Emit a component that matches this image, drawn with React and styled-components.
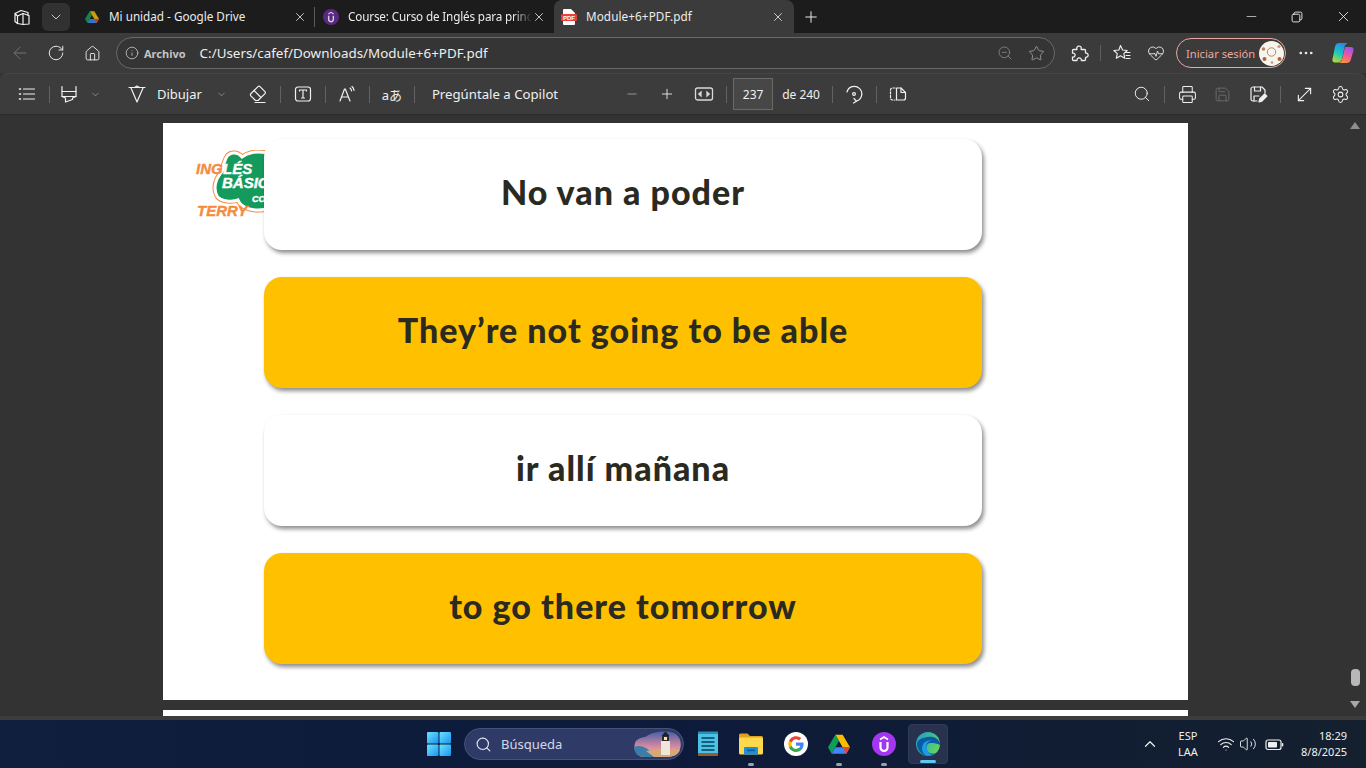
import React from "react";
import styled, { createGlobalStyle } from "styled-components";
import {
  ArrowLeft, RotateCw, Home, Info, ZoomOut, Star, HeartPulse, MoreHorizontal,
  ChevronDown, ChevronUp, X, Plus, Minus, Search, Printer, Save, Settings,
  Wifi, Volume2, MoveDiagonal,
} from "lucide-react";

const GlobalStyle = createGlobalStyle`
  html, body { margin: 0; padding: 0; width: 1366px; height: 768px; overflow: hidden; background: #333; }
  * { box-sizing: border-box; }
  body { font-family: "Noto Sans", "Open Sans", sans-serif; }
`;

/* small drawn icons that the packages don't have */
const Line = ({ size = 18, children, color = "#f0f0f0", sw = 1.2 }) => (
  <svg width={size} height={size} viewBox="0 0 20 20" fill="none" stroke={color} strokeWidth={sw} strokeLinecap="round" strokeLinejoin="round">
    {children}
  </svg>
);

const Workspaces = () => (
  <Line size={20}>
    <path d="M3 6.500 9 3.500l7 2v3M3 6.500v8l2.500 2V9z" />
    <path d="M5.500 9 11 6.500l6 2v8.500l-6 .5-5.500-1" />
    <path d="M11 6.500V17" />
  </Line>
);

const ListIcon = () => (
  <Line size={20}>
    <path d="M6.500 5h11M6.500 10h11M6.500 15h11" />
    <path d="M2.500 5h1M2.500 10h1M2.500 15h1" strokeWidth="1.600" />
  </Line>
);

const Highlighter = () => (
  <Line size={20}>
    <path d="M3 2.500v5h14v-5" />
    <path d="M3 7.500v5l3.500 1.500V18l7-2.500V14l3.500-1.500v-5" />
    <path d="M3 12.500h14" />
  </Line>
);

const Pen = () => (
  <Line size={20}>
    <path d="M2 3.500h16" />
    <path d="M4 4l6 14 6-14" />
    <path d="M7.500 3.500 10 2l2.500 1.500" />
  </Line>
);

const EraserIcon = () => (
  <Line size={20}>
    <path d="M7.500 16.500 2.800 11.800a1.400 1.400 0 0 1 0-2L10 2.600a1.400 1.400 0 0 1 2 0l5 5a1.400 1.400 0 0 1 0 2L10 16.500z" />
    <path d="M6 6.500l6.500 6.500" />
    <path d="M7 18.500h10" />
  </Line>
);

const TextBox = () => (
  <Line size={20}>
    <rect x="2.500" y="3" width="15" height="14" rx="2.500" />
    <path d="M6.500 7V6h7v1M10 6v8M8.500 14h3" />
  </Line>
);

const ReadAloud = () => (
  <Line size={20}>
    <path d="M3 17 7.500 5h.8L13 17M4.800 13h6.500" />
    <path d="M13 4c1 .8 1.400 1.600 1.600 2.800M15 2.500c1.300 1 1.800 2.200 2 3.800" />
  </Line>
);

const FitWidth = () => (
  <svg width="20" height="20" viewBox="0 0 20 20" fill="none" stroke="#d8d8d8" strokeWidth="1.300">
    <rect x="1.500" y="4" width="17" height="12" rx="2" />
    <path d="M7 8 4.800 10 7 12zM13 8l2.200 2L13 12z" fill="#d8d8d8" />
  </svg>
);

const RotatePage = () => (
  <Line size={20}>
    <path d="M3 8a7.500 7.500 0 1 1 9.500 9" />
    <path d="M10 14.500 12.500 17.300 9.500 19" />
    <circle cx="10" cy="10" r="1.400" />
  </Line>
);

const PageView = () => (
  <Line size={20}>
    <path d="M7 4H4.500a2 2 0 0 0-2 2v8a2 2 0 0 0 2 2H7" strokeDasharray="2 1.600" />
    <path d="M8.500 4H13l4.500 4.500V14a2 2 0 0 1-2 2h-7z" />
    <path d="M13 4v4.500h4.500" />
  </Line>
);

const SaveAs = () => (
  <Line size={20}>
    <path d="M9 17H5a2 2 0 0 1-2-2V5a2 2 0 0 1 2-2h9l3 3v3" />
    <path d="M6.500 3v4h6V3M6 17v-5h5" />
    <path d="M11 18l.7-3 5-5 2.200 2.200-5 5z" fill="#f0f0f0" />
  </Line>
);

const PuzzleIcon = () => (
  <Line size={20} color="#ececec" sw={1.300}>
    <path d="M4.500 6.500H8a2.300 2.300 0 1 1 4.300-1l-.2 1h3.400a1 1 0 0 1 1 1V10a2.200 2.200 0 1 1 0 4.300v2.200a1 1 0 0 1-1 1h-3.200a2.200 2.200 0 1 0-4.300 0H4.500a1 1 0 0 1-1-1V14a2 2 0 1 0 0-3.800V7.500a1 1 0 0 1 1-1z" />
  </Line>
);

const FavList = () => (
  <Line size={20} sw={1.100}>
    <path d="M8.500 2.500 10.600 7l4.600.5-3.400 3.100 1 4.600-4.300-2.400-4.200 2.400 1-4.600-3.500-3.100L6.900 7z" />
    <path d="M13.500 9.500H18M14 12.500h4M14 15.500h4" />
  </Line>
);

const Copilot = () => (
  <svg width="24" height="24" viewBox="0 0 24 24">
    <defs>
      <linearGradient id="copA" x1="0.600" y1="0" x2="0.200" y2="1">
        <stop offset="0" stopColor="#2a86ee" /><stop offset="0.5" stopColor="#17c8c0" /><stop offset="1" stopColor="#b4dc30" />
      </linearGradient>
      <linearGradient id="copB" x1="0.700" y1="0" x2="0.300" y2="1">
        <stop offset="0" stopColor="#9a55ea" /><stop offset="0.5" stopColor="#f0589a" /><stop offset="1" stopColor="#f8953a" />
      </linearGradient>
    </defs>
    <path d="M8 2h9c-2 .5-3 2-3.500 4L11 18c-.5 2-2 3.500-4 3.500H4C2 21.500 1 20 1.500 18L4 6C4.500 3.500 6 2 8 2z" fill="url(#copA)" />
    <path d="M14 6h6c2 0 3 1.500 2.500 3.500L20 18c-.5 2.500-2 4-4.500 4H7c2 0 3.500-1.500 4-3.500z" fill="url(#copB)" />
  </svg>
);

const DriveLogo = ({ size = 14 }) => (
  <svg width={size} height={size} viewBox="0 0 24 22">
    <path d="M8 1h8l8 13.500h-8z" fill="#fbbc04" />
    <path d="M8 1 0 14.500 4 21.500l8-14z" fill="#0f9d58" />
    <path d="M4 21.500h16l4-7H8z" fill="#4285f4" />
    <path d="M20 21.500l4-7h-8z" fill="#ea4335" />
  </svg>
);

const UdemyLogo = ({ size = 16, bg = "#a435f0" }) => (
  <svg width={size} height={size} viewBox="0 0 24 24">
    <circle cx="12" cy="12" r="12" fill={bg} />
    <path d="M8 7.500 12 5l4 2.500" fill="none" stroke="#fff" strokeWidth="1.700" />
    <path d="M8.500 10v5.500a3.500 3.500 0 0 0 7 0V10" fill="none" stroke="#fff" strokeWidth="2.200" />
  </svg>
);

const PdfBadge = () => (
  <svg width="16" height="16" viewBox="0 0 16 16">
    <path d="M3 0h7l4 4v11a1 1 0 0 1-1 1H3a1 1 0 0 1-1-1V1a1 1 0 0 1 1-1z" fill="#fff" />
    <rect x="0" y="5" width="16" height="7" rx="1" fill="#ee3b3b" />
    <text x="8" y="10.800" textAnchor="middle" fontSize="6" fontWeight="700" fontFamily="Liberation Sans" fill="#fff">PDF</text>
  </svg>
);

const Avatar = () => (
  <svg width="25" height="25" viewBox="0 0 25 25">
    <circle cx="12.500" cy="12.500" r="12.500" fill="#f8f4ee" />
    <circle cx="12.500" cy="11" r="4.200" fill="none" stroke="#b08a68" strokeWidth="1" />
    <circle cx="4.500" cy="8" r="1.800" fill="#b98354" />
    <circle cx="20" cy="5.500" r="1.600" fill="#c49a72" />
    <circle cx="5.500" cy="18" r="2" fill="#a8683a" />
    <circle cx="20.500" cy="18" r="2" fill="#a8683a" />
    <circle cx="13" cy="21.500" r="1.300" fill="#c29a75" />
  </svg>
);

const WinLogo = () => (
  <svg width="24" height="24" viewBox="0 0 24 24">
    <defs>
      <linearGradient id="winG" x1="0" y1="0" x2="1" y2="1">
        <stop offset="0" stopColor="#6be3ff" /><stop offset="1" stopColor="#1a93ef" />
      </linearGradient>
    </defs>
    <rect x="0" y="0" width="11.500" height="11.500" rx="1" fill="url(#winG)" />
    <rect x="12.500" y="0" width="11.500" height="11.500" rx="1" fill="url(#winG)" />
    <rect x="0" y="12.500" width="11.500" height="11.500" rx="1" fill="url(#winG)" />
    <rect x="12.500" y="12.500" width="11.500" height="11.500" rx="1" fill="url(#winG)" />
  </svg>
);

const Lighthouse = () => (
  <svg width="50" height="30" viewBox="0 0 50 30">
    <defs>
      <linearGradient id="skyG" x1="0" y1="0" x2="0" y2="1">
        <stop offset="0" stopColor="#4a5fa8" /><stop offset="0.6" stopColor="#d88aa0" /><stop offset="1" stopColor="#f2b37a" />
      </linearGradient>
    </defs>
    <path d="M3 14c2-6 9-5 12-7 5-4 18-6 27-3 6 3 8 10 6 16-2 6-8 8-14 8H12C5 28 1 20 3 14z" fill="url(#skyG)" />
    <path d="M2 18c8-3 15 2 22 10H12C6 28 2 24 2 18z" fill="#3b7ca8" />
    <path d="M14 22c8-2 24-3 34-1-2 5-7 7-14 7H22z" fill="#d6a878" />
    <rect x="29" y="12" width="9" height="14" fill="#eee6da" />
    <rect x="30" y="7" width="7" height="5" fill="#2a2a34" />
    <path d="M29.500 7 33.500 2.500 37.500 7z" fill="#1f1f28" />
    <rect x="32" y="8" width="3" height="3" fill="#ffe39a" />
  </svg>
);

const Notepad = () => (
  <svg width="20" height="26" viewBox="0 0 20 26">
    <rect x="0" y="1" width="20" height="24" rx="1" fill="#4cc2e4" />
    <rect x="0" y="22" width="20" height="3" fill="#9a5a2c" />
    <rect x="0" y="0.500" width="20" height="2.500" fill="#2a8fb8" />
    <path d="M3.500 7h13M3.500 11h13M3.500 15h13M3.500 19h13" stroke="#155f80" strokeWidth="1.800" />
  </svg>
);

const Explorer = () => (
  <svg width="24" height="22" viewBox="0 0 24 22">
    <path d="M0 2a1.500 1.500 0 0 1 1.500-1.500h7L11 3h11.500A1.500 1.500 0 0 1 24 4.500V8H0z" fill="#e0a21a" />
    <rect x="0" y="4.500" width="24" height="17" rx="1.500" fill="#ffd84d" />
    <rect x="5" y="14" width="14" height="7.500" rx="1" fill="#1d8fd6" />
    <rect x="8" y="16.500" width="8" height="1.700" fill="#0d5f9e" />
  </svg>
);

const GoogleG = () => (
  <svg width="24" height="24" viewBox="0 0 24 24">
    <circle cx="12" cy="12" r="12" fill="#fff" />
    <path d="M19.600 12.200c0-.6-.1-1.100-.2-1.600H12v3.100h4.300c-.2 1-.8 1.900-1.700 2.400v2h2.600c1.500-1.400 2.400-3.400 2.400-5.900z" fill="#4285f4" />
    <path d="M12 20c2.200 0 4-.7 5.200-1.900l-2.600-2c-.7.500-1.600.8-2.600.8-2 0-3.700-1.400-4.300-3.200H5v2c1.300 2.600 4 4.300 7 4.300z" fill="#34a853" />
    <path d="M7.700 13.700a4.800 4.800 0 0 1 0-3.100v-2H5a8 8 0 0 0 0 7.100z" fill="#fbbc04" />
    <path d="M12 7.200c1.100 0 2.200.4 3 1.200l2.300-2.300A8 8 0 0 0 5 8.600l2.700 2c.6-1.900 2.300-3.400 4.300-3.400z" fill="#ea4335" />
  </svg>
);

const EdgeLogo = () => (
  <svg width="24" height="24" viewBox="0 0 24 24">
    <defs>
      <linearGradient id="edgeTop" x1="0" y1="0" x2="1" y2="0.700">
        <stop offset="0" stopColor="#1a9ad6" /><stop offset="1" stopColor="#62d85a" />
      </linearGradient>
    </defs>
    <circle cx="12" cy="12" r="12" fill="url(#edgeTop)" />
    <path d="M1 12c0 6 5 12 11 12 3 0 6-1 8-3-5 2-9-1-9.500-4.500C10 13 12 11 15 11c3.500 0 6 .5 9 2 0-1 0-2-.3-3C21 5 16 4 11 5 5 6 1.500 8 1 12z" fill="#0c59a4" />
    <path d="M12 24c-5-1-7-6-5.500-10.500S13 7.500 16 9c-3-.6-5 1.500-5.500 4-.6 4 1.500 8 5.500 9.600-1.200.9-2.700 1.400-4 1.400z" fill="#1b9de2" />
  </svg>
);

const cloverPath = "M72 3C60 0 51 4 47 7 42 1 34 2 31 8 29 12 28 15 28 20 22 27 17 36 22 46 26 52 38 52 43 50 46 58 58 62 72 59Z";

const Logo = () => (
  <svg width="70" height="70" viewBox="0 0 70 70" fontFamily="Liberation Sans" fontWeight="700" fontStyle="italic" strokeWidth="0.400">
    <path d={cloverPath} fill="#fff" stroke="#f58b3f" strokeWidth="5" />
    <path d={cloverPath} fill="#139a5c" stroke="#fff" strokeWidth="3" />
    <text x="1" y="24" fontSize="15" fill="#f58b3f" stroke="#f58b3f">ING</text>
    <text x="28" y="24" fontSize="15" fill="#fff" stroke="#fff">LÉS</text>
    <text x="27" y="38" fontSize="15" fill="#fff" stroke="#fff">BÁSIC</text>
    <text x="57" y="52" fontSize="9" fill="#fff" stroke="#fff">CO</text>
    <text x="2" y="66" fontSize="15" fill="#f58b3f" stroke="#f58b3f">TERRY</text>
  </svg>
);

const BatteryIcon = () => (
  <svg width="19" height="19" viewBox="0 0 19 19" fill="none">
    <rect x="1" y="5" width="15" height="9.500" rx="2" stroke="#f0f0f0" strokeWidth="1.200" />
    <rect x="3" y="7" width="9" height="5.500" rx="0.800" fill="#f0f0f0" />
    <rect x="16.800" y="8" width="1.500" height="3.500" rx="0.700" fill="#f0f0f0" />
  </svg>
);

const cards = [
  { text: "No van a poder", fill: "#ffffff" },
  { text: "They’re not going to be able", fill: "#ffc000" },
  { text: "ir allí mañana", fill: "#ffffff" },
  { text: "to go there tomorrow", fill: "#ffc000" },
];

function App() {
  return (
    <>
      <GlobalStyle />
      <Screen>
        <TabStrip>
          <StripIcon $w={44}><Workspaces /></StripIcon>
          <TabMenu><ChevronDown size={16} strokeWidth={1.3} color="#e0e0e0" /></TabMenu>
          <Tab $w={240}>
            <TabFav $dim><DriveLogo /></TabFav>
            <TabTitle>Mi unidad - Google Drive</TabTitle>
            <X size={14} strokeWidth={1.4} color="#e8e8e8" />
          </Tab>
          <TabDivider />
          <Tab $w={234} $pl={7} $pr={3}>
            <TabFav $dim><UdemyLogo bg="#6a2c9c" /></TabFav>
            <TabTitle $fade>Course: Curso de Inglés para princ</TabTitle>
            <X size={14} strokeWidth={1.4} color="#e8e8e8" />
          </Tab>
          <ActiveTab $w={240} $pl={6} $pr={9}>
            <TabFav><PdfBadge /></TabFav>
            <TabTitle $spaced>Module+6+PDF.pdf</TabTitle>
            <X size={14} strokeWidth={1.4} color="#e8e8e8" />
          </ActiveTab>
          <StripIcon $w={34}><Plus size={18} strokeWidth={1.3} color="#f0f0f0" /></StripIcon>
          <WindowControls>
            <WinBtn><Minus size={15} strokeWidth={1.1} color="#f0f0f0" /></WinBtn>
            <WinBtn>
              <Line size={14} color="#f0f0f0" sw={1.3}>
                <rect x="3" y="6" width="11" height="11" rx="2" />
                <path d="M6 6V5a2 2 0 0 1 2-2h7a2 2 0 0 1 2 2v7a2 2 0 0 1-2 2h-1" />
              </Line>
            </WinBtn>
            <WinBtn><X size={17} strokeWidth={1.2} color="#f0f0f0" /></WinBtn>
          </WindowControls>
        </TabStrip>

        <AddressRow>
          <NavBtn><ArrowLeft size={20} strokeWidth={1.1} color="#767676" /></NavBtn>
          <NavBtn><RotateCw size={18} strokeWidth={1.3} color="#ececec" /></NavBtn>
          <NavBtn><Home size={17} strokeWidth={1.3} color="#ececec" /></NavBtn>
          <UrlPill>
            <Info size={14} strokeWidth={1.3} color="#cfcfcf" />
            <FileTag>Archivo</FileTag>
            <UrlText>C:/Users/cafef/Downloads/Module+6+PDF.pdf</UrlText>
            <PillIcons>
              <ZoomOut size={16} strokeWidth={1.2} color="#8d8d8d" />
              <Star size={17} strokeWidth={1.2} color="#a0a0a0" />
            </PillIcons>
          </UrlPill>
          <AddressTools>
            <PuzzleIcon />
            <RowSep />
            <FavBox><FavList /></FavBox>
            <HeartBox><HeartPulse size={18} strokeWidth={1.2} color="#ececec" /></HeartBox>
            <SignIn>
              <span>Iniciar sesión</span>
              <Avatar />
            </SignIn>
            <MoreBox><MoreHorizontal size={18} strokeWidth={1.6} color="#ececec" /></MoreBox>
            <CopilotBox><Copilot /></CopilotBox>
          </AddressTools>
        </AddressRow>

        <PdfBar>
          <ToolSlot $w={30}><ListIcon /></ToolSlot>
          <ToolSep />
          <ToolSlot $w={26}><Highlighter /></ToolSlot>
          <ToolSlot $w={26}><ChevronDown size={11} strokeWidth={1.2} color="#bdbdbd" /></ToolSlot>
          <ToolSlot $w={30} $ml={14}><Pen /></ToolSlot>
          <ToolLabel $ml={5}>Dibujar</ToolLabel>
          <ToolSlot $w={26} $ml={7}><ChevronDown size={11} strokeWidth={1.2} color="#bdbdbd" /></ToolSlot>
          <ToolSlot $w={30} $ml={8}><EraserIcon /></ToolSlot>
          <ToolSep />
          <ToolSlot $w={30} $ml={1}><TextBox /></ToolSlot>
          <ToolSep />
          <ToolSlot $w={30}><ReadAloud /></ToolSlot>
          <ToolSep />
          <ToolSlot $w={30} $ml={1}><TranslateGlyph>aあ</TranslateGlyph></ToolSlot>
          <ToolSep />
          <ToolLabel $ml={11} $wide>Pregúntale a Copilot</ToolLabel>
          <ToolSlot $w={30} $ml={59}><Minus size={14} strokeWidth={1.4} color="#a8a8a8" /></ToolSlot>
          <ToolSlot $w={30} $ml={5}><Plus size={16} strokeWidth={1.3} color="#f0f0f0" /></ToolSlot>
          <ToolSlot $w={30} $ml={7}><FitWidth /></ToolSlot>
          <ToolSep />
          <PageInput>237</PageInput>
          <PageCount>de 240</PageCount>
          <ToolSep />
          <ToolSlot $w={30}><RotatePage /></ToolSlot>
          <ToolSep />
          <ToolSlot $w={30}><PageView /></ToolSlot>
          <BarRight>
            <ToolSlot $w={30}><Search size={18} strokeWidth={1.3} color="#f0f0f0" /></ToolSlot>
            <ToolSep />
            <ToolSlot $w={30} $ml={1}><Printer size={19} strokeWidth={1.3} color="#f0f0f0" /></ToolSlot>
            <ToolSlot $w={30} $ml={5}><Save size={17} strokeWidth={1.2} color="#6f6f6f" /></ToolSlot>
            <ToolSlot $w={30} $ml={6}><SaveAs /></ToolSlot>
            <ToolSep />
            <ToolSlot $w={30} $ml={2}><MoveDiagonal size={21} strokeWidth={1.3} color="#f0f0f0" /></ToolSlot>
            <ToolSlot $w={30} $ml={6}><Settings size={19} strokeWidth={1.3} color="#f0f0f0" /></ToolSlot>
          </BarRight>
        </PdfBar>

        <Viewer>
          <PageColumn>
            <Page>
              <LogoMark><Logo /></LogoMark>
              <CardStack>
                {cards.map((card) => (
                  <Card key={card.text} $fill={card.fill}>{card.text}</Card>
                ))}
              </CardStack>
            </Page>
            <NextPage />
          </PageColumn>
          <ScrollBar>
            <ScrollArrow $up />
            <ScrollThumb />
            <ScrollArrow />
          </ScrollBar>
        </Viewer>

        <WindowEdge />

        <Taskbar>
          <TaskCenter>
            <StartBtn><WinLogo /></StartBtn>
            <SearchBox>
              <Search size={17} strokeWidth={1.6} color="#e6e8f0" />
              <SearchText>Búsqueda</SearchText>
              <Lighthouse />
            </SearchBox>
            <TaskIcon $ml={4}><Notepad /></TaskIcon>
            <TaskIcon $ml={3} $dot><Explorer /></TaskIcon>
            <TaskIcon $ml={5}><GoogleG /></TaskIcon>
            <TaskIcon $ml={3} $dot><DriveLogo size={22} /></TaskIcon>
            <TaskIcon $ml={5} $dot><UdemyLogo size={24} /></TaskIcon>
            <ActiveTask><EdgeLogo /></ActiveTask>
          </TaskCenter>
          <Tray>
            <ChevronUp size={18} strokeWidth={1.6} color="#f0f0f0" />
            <LangBlock><span>ESP</span><span>LAA</span></LangBlock>
            <TrayIcons>
              <Wifi size={18} strokeWidth={1.5} color="#f0f0f0" />
              <Volume2 size={18} strokeWidth={1.2} color="#f0f0f0" />
              <BatteryIcon />
            </TrayIcons>
            <Clock><span>18:29</span><span>8/8/2025</span></Clock>
          </Tray>
        </Taskbar>
      </Screen>
    </>
  );
}

const Screen = styled.div`
  width: 1366px;
  height: 768px;
  display: flex;
  flex-direction: column;
  overflow: hidden;
`;

const TabStrip = styled.div`
  height: 33px;
  background: #1c1c1c;
  display: flex;
  align-items: center;
  color: #ededed;
`;

const StripIcon = styled.div`
  width: ${(p) => p.$w}px;
  height: 33px;
  display: flex;
  align-items: center;
  justify-content: center;
`;

const TabMenu = styled.div`
  width: 28px;
  height: 28px;
  border-radius: 6px;
  background: #313131;
  display: flex;
  align-items: center;
  justify-content: center;
  margin-left: -2px;
  margin-right: 4px;
`;

const Tab = styled.div`
  width: ${(p) => p.$w}px;
  height: 33px;
  padding: 0 ${(p) => p.$pr ?? 7}px 0 ${(p) => p.$pl ?? 9}px;
  display: flex;
  align-items: center;
  overflow: hidden;
`;

const TabDivider = styled.div`
  width: 1px;
  height: 20px;
  background: #5a5a5a;
`;

const ActiveTab = styled(Tab)`
  margin-left: 5px;
  background: #3b3b3b;
  border-radius: 8px 8px 0 0;
`;

const TabFav = styled.div`
  width: 17px;
  height: 16px;
  margin-right: 9px;
  flex-shrink: 0;
  display: flex;
  align-items: center;
  justify-content: center;
  opacity: ${(p) => (p.$dim ? 0.8 : 1)};
`;

const TabTitle = styled.div`
  flex: 1;
  min-width: 0;
  padding-bottom: 2px;
  white-space: nowrap;
  font-size: 11.700px;
  color: #ececec;
  ${(p) => p.$spaced && "letter-spacing: 0.1px;"}
  ${(p) => p.$fade && "letter-spacing: -0.15px; -webkit-mask-image: linear-gradient(90deg, #000 90%, transparent 100%);"}
`;

const WindowControls = styled.div`
  margin-left: auto;
  display: flex;
`;

const WinBtn = styled.div`
  width: 46px;
  height: 33px;
  display: flex;
  align-items: center;
  justify-content: center;
`;

const AddressRow = styled.div`
  height: 40px;
  background: #3b3b3b;
  display: flex;
  align-items: center;
  padding-left: 2px;
`;

const NavBtn = styled.div`
  width: 36px;
  height: 36px;
  display: flex;
  align-items: center;
  justify-content: center;
`;

const UrlPill = styled.div`
  width: 939px;
  height: 32px;
  margin-left: 6px;
  border: 1px solid #696969;
  border-radius: 16px;
  background: #353535;
  display: flex;
  align-items: center;
  padding: 0 9px 0 8px;
`;

const FileTag = styled.span`
  font-size: 11px;
  font-weight: 700;
  color: #c4c4c4;
  margin-left: 5px;
`;

const UrlText = styled.span`
  font-size: 13.400px;
  color: #eeeeee;
  margin-left: 14px;
`;

const PillIcons = styled.div`
  margin-left: auto;
  display: flex;
  align-items: center;
  gap: 15px;
`;

const AddressTools = styled.div`
  display: flex;
  align-items: center;
  margin-left: 14px;
`;

const RowSep = styled.div`
  width: 1px;
  height: 16px;
  background: #5f5f5f;
  margin: 0 11px;
`;

const FavBox = styled.div`
  width: 20px;
  display: flex;
  margin-right: 15px;
`;

const HeartBox = styled.div`
  width: 18px;
  display: flex;
  margin-right: 11px;
`;

const SignIn = styled.div`
  width: 110px;
  height: 30px;
  border: 1.500px solid #e8a8a0;
  border-radius: 15px;
  display: flex;
  align-items: center;
  justify-content: space-between;
  padding: 0 1px 0 9px;
  font-size: 11.200px;
  color: #eba9a1;
`;

const MoreBox = styled.div`
  width: 18px;
  display: flex;
  margin-left: 11px;
`;

const CopilotBox = styled.div`
  width: 24px;
  display: flex;
  margin-left: 16px;
`;

const PdfBar = styled.div`
  height: 42px;
  background: #3c3c3c;
  border-radius: 8px 8px 0 0;
  border-top: 1px solid #444;
  border-bottom: 1px solid #2a2a2a;
  display: flex;
  align-items: center;
  padding-left: 12px;
  color: #f0f0f0;
`;

const ToolSlot = styled.div`
  width: ${(p) => p.$w}px;
  margin-left: ${(p) => p.$ml || 0}px;
  height: 30px;
  flex-shrink: 0;
  display: flex;
  align-items: center;
  justify-content: center;
`;

const ToolSep = styled.div`
  width: 1px;
  height: 17px;
  background: #626262;
  margin: 0 6px 0 7px;
  flex-shrink: 0;
`;

const ToolLabel = styled.span`
  font-size: ${(p) => (p.$wide ? 13.200 : 13)}px;
  color: #f0f0f0;
  margin-left: ${(p) => p.$ml || 0}px;
  white-space: nowrap;
`;

const TranslateGlyph = styled.span`
  font-family: "Noto Sans", "Noto Sans CJK JP", sans-serif;
  font-size: 13px;
  color: #f0f0f0;
  white-space: nowrap;
`;

const PageInput = styled.div`
  width: 40px;
  height: 32px;
  background: #474747;
  border: 1px solid #6a6a6a;
  display: flex;
  align-items: center;
  justify-content: center;
  font-size: 12px;
  color: #f0f0f0;
`;

const PageCount = styled.span`
  font-size: 12px;
  color: #f0f0f0;
  margin-left: 9px;
  margin-right: 5px;
  white-space: nowrap;
`;

const BarRight = styled.div`
  margin-left: auto;
  display: flex;
  align-items: center;
  padding-right: 11px;
`;

const Viewer = styled.div`
  flex: 1;
  min-height: 0;
  background: #333333;
  display: flex;
  overflow: hidden;
`;

const PageColumn = styled.div`
  width: 1348px;
  padding: 8px 0 0 163px;
  display: flex;
  flex-direction: column;
  gap: 10px;
`;

const Page = styled.div`
  position: relative;
  width: 1025px;
  height: 577px;
  flex-shrink: 0;
  background: #ffffff;
  padding: 16px 0 0 101px;
`;

const NextPage = styled.div`
  width: 1025px;
  height: 6px;
  flex-shrink: 0;
  background: #ffffff;
`;

const LogoMark = styled.div`
  position: absolute;
  left: 32px;
  top: 27px;
  width: 70px;
  height: 70px;
  overflow: hidden;
`;

const CardStack = styled.div`
  position: relative;
  width: 718px;
  display: flex;
  flex-direction: column;
  gap: 27px;
`;

const Card = styled.div`
  height: 111px;
  padding-bottom: 7px;
  border-radius: 18px;
  background: ${(p) => p.$fill};
  box-shadow: 2px 3px 4px rgba(0, 0, 0, 0.45);
  display: flex;
  align-items: center;
  justify-content: center;
  font-family: "Lato", "Liberation Sans", sans-serif;
  font-weight: 900;
  font-size: 34px;
  letter-spacing: 1px;
  color: #2b2a20;
`;

const ScrollBar = styled.div`
  width: 18px;
  padding: 7px 4px 8px 0;
  display: flex;
  flex-direction: column;
  align-items: center;
  justify-content: space-between;
`;

const ScrollArrow = styled.div`
  width: 0;
  height: 0;
  border-left: 5px solid transparent;
  border-right: 5px solid transparent;
  ${(p) => (p.$up ? "border-bottom: 7px solid #8e8e8e;" : "border-top: 7px solid #a8a8a8;")}
`;

const ScrollThumb = styled.div`
  width: 9px;
  height: 17px;
  border-radius: 4px;
  background: #b8b8b8;
  margin-top: auto;
  margin-bottom: 15px;
`;

const WindowEdge = styled.div`
  height: 4px;
  background: #3a3c3d;
`;

const Taskbar = styled.div`
  height: 48px;
  background: linear-gradient(90deg, #0f1f3d 0%, #0d1a3a 50%, #14202e 100%);
  display: flex;
  align-items: center;
  padding-left: 427px;
  padding-right: 19px;
  color: #f0f0f0;
`;

const TaskCenter = styled.div`
  display: flex;
  align-items: center;
`;

const StartBtn = styled.div`
  width: 24px;
  height: 24px;
  display: flex;
`;

const SearchBox = styled.div`
  width: 220px;
  height: 32px;
  margin-left: 13px;
  border-radius: 16px;
  background: #2f3b66;
  border: 1px solid #46517a;
  display: flex;
  align-items: center;
  padding: 0 1px 0 10px;
`;

const SearchText = styled.span`
  font-size: 13px;
  color: #d4d8e6;
  margin-left: 9px;
  margin-right: auto;
`;

const TaskIcon = styled.div`
  position: relative;
  width: 40px;
  height: 40px;
  margin-left: ${(p) => p.$ml || 0}px;
  display: flex;
  align-items: center;
  justify-content: center;
  &::after {
    content: "";
    display: ${(p) => (p.$dot ? "block" : "none")};
    position: absolute;
    left: 17px;
    bottom: -2px;
    width: 6px;
    height: 3px;
    border-radius: 2px;
    background: #9aa0ac;
  }
`;

const ActiveTask = styled.div`
  position: relative;
  width: 40px;
  height: 40px;
  margin-left: 4px;
  border-radius: 4px;
  background: #28324e;
  border: 1px solid #323c58;
  display: flex;
  align-items: center;
  justify-content: center;
  &::after {
    content: "";
    position: absolute;
    left: 11px;
    bottom: 0;
    width: 16px;
    height: 3px;
    border-radius: 2px;
    background: #5ec8f5;
  }
`;

const Tray = styled.div`
  margin-left: auto;
  display: flex;
  align-items: center;
`;

const LangBlock = styled.div`
  width: 30px;
  margin-left: 14px;
  display: flex;
  flex-direction: column;
  align-items: center;
  font-size: 11px;
  line-height: 16px;
`;

const TrayIcons = styled.div`
  display: flex;
  align-items: center;
  gap: 4px;
  margin-left: 14px;
  & > :last-child {
    margin-left: 4px;
  }
`;

const Clock = styled.div`
  width: 62px;
  margin-left: 1px;
  display: flex;
  flex-direction: column;
  align-items: flex-end;
  font-size: 11px;
  line-height: 16px;
`;

export default App;
